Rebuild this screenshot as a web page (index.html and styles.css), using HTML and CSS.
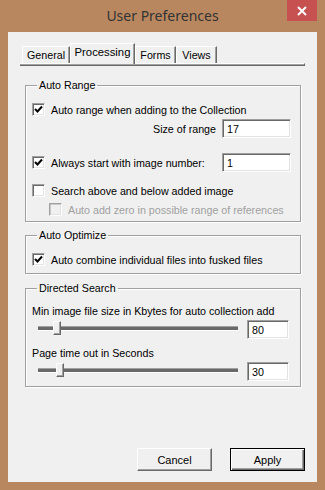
FILE: index.html
```html
<!DOCTYPE html>
<html lang="en">
<head>
    <meta charset="UTF-8">
    <meta name="viewport" content="width=device-width, initial-scale=1.0">
    <title>User Preferences</title>
    <link rel="stylesheet" href="styles.css">
</head>

<body>
    <div class="window">
        <div class="titlebar">
            <span></span>
            <h1 class="title">User Preferences</h1>
            <button class="close" type="button" aria-label="Close">
                <svg width="10" height="10" viewBox="0 0 10 10"><path d="M1 1L9 9M9 1L1 9" stroke="#fff" stroke-width="2"/></svg>
            </button>
        </div>

        <form class="client" action="#">
            <div class="tabs">
                <div class="tab tab-general">General</div>
                <div class="tab tab-processing active">Processing</div>
                <div class="tab tab-forms">Forms</div>
                <div class="tab tab-views">Views</div>
            </div>
            <div class="tab-panel"></div>

            <fieldset class="group group-range">
                <legend>Auto Range</legend>
                <label class="row">
                    <span class="box checked"><svg width="9" height="9" viewBox="0 0 9 9"><path d="M1 4L3.5 6.5L8 1.5" fill="none" stroke="#000" stroke-width="2"/></svg></span>
                    Auto range when adding to the Collection
                </label>
                <div class="row row-end">
                    <label for="rangeSize">Size of range</label>
                    <input class="field" type="text" id="rangeSize" value="17">
                </div>
                <div class="row row-start">
                    <label class="check">
                        <span class="box checked"><svg width="9" height="9" viewBox="0 0 9 9"><path d="M1 4L3.5 6.5L8 1.5" fill="none" stroke="#000" stroke-width="2"/></svg></span>
                        Always start with image number:
                    </label>
                    <input class="field field-push" type="text" value="1">
                </div>
                <label class="row row-search">
                    <span class="box"></span>
                    Search above and below added image
                </label>
                <label class="row row-sub disabled">
                    <span class="box"></span>
                    Auto add zero in possible range of references
                </label>
            </fieldset>

            <fieldset class="group group-optimize">
                <legend>Auto Optimize</legend>
                <label class="row">
                    <span class="box checked"><svg width="9" height="9" viewBox="0 0 9 9"><path d="M1 4L3.5 6.5L8 1.5" fill="none" stroke="#000" stroke-width="2"/></svg></span>
                    Auto combine individual files into fusked files
                </label>
            </fieldset>

            <fieldset class="group group-search">
                <legend>Directed Search</legend>
                <div class="row">Min image file size in Kbytes for auto collection add</div>
                <div class="row row-slider">
                    <div class="slider"><span class="thumb" style="left: 15px"></span></div>
                    <input class="field field-small" type="text" value="80">
                </div>
                <div class="row row-label">Page time out in Seconds</div>
                <div class="row row-slider">
                    <div class="slider"><span class="thumb" style="left: 18px"></span></div>
                    <input class="field field-small" type="text" value="30">
                </div>
            </fieldset>

            <div class="actions">
                <button class="btn" type="button">Cancel</button>
                <button class="btn btn-default" type="submit">Apply</button>
            </div>
        </form>
    </div>
</body>
</html>
```

FILE: styles.css
```css
* {
    box-sizing: border-box;
}

body {
    margin: 0;
    background-color: #b9875f;
    font-family: "Liberation Sans", Arial, sans-serif;
    font-size: 10.7px;
    color: #000;
}

.window {
    width: 325px;
    height: 490px;
}

.titlebar {
    height: 32px;
    display: grid;
    grid-template-columns: 1fr auto 1fr;
}

.title {
    margin: 0;
    font-family: "Noto Sans", sans-serif;
    font-weight: normal;
    font-size: 14px;
    line-height: 32px;
    color: #333;
}

.close {
    justify-self: end;
    width: 30px;
    height: 21px;
    margin-right: 8px;
    padding: 0;
    border: none;
    background-color: #c75050;
    display: flex;
    align-items: center;
    justify-content: center;
}

.client {
    margin: 0 8px;
    height: 450px;
    padding: 0 12px 11px;
    background-color: #f0f0f0;
    display: flex;
    flex-direction: column;
}

/* tabs */
.tabs {
    margin: 11px 0 0 2px;
    height: 20px;
    display: flex;
    align-items: flex-end;
}

.tab {
    height: 17px;
    line-height: 16px;
    text-align: center;
    background-color: #f0f0f0;
    border-top: 1px solid #fff;
    border-left: 1px solid #fff;
    border-right: 1px solid #696969;
    box-shadow: inset -1px 0 #a0a0a0;
}

.tab-general { width: 48px; }
.tab-processing { width: 65px; }
.tab-forms { width: 41px; }
.tab-views { width: 41px; }

.tab.active {
    height: 21px;
    line-height: 17px;
    margin-bottom: -1px;
    position: relative;
    font-size: 11.3px;
}

.tab-panel {
    height: 3px;
    border-top: 1px solid #fff;
    border-bottom: 1px solid #696969;
    border-right: 1px solid #696969;
    box-shadow: inset 0 -1px #a0a0a0;
}

/* group boxes */
.group {
    margin: 13px 4px 0 5px;
    padding: 8px 9px 2px 6px;
    border: 1px solid #a0a0a0;
    box-shadow: 1px 1px #fff, inset 1px 1px #fff;
    min-width: 0;
}

.group legend {
    margin-left: 5px;
    padding: 0 2px;
    line-height: 13px;
}

.group-optimize {
    margin-top: 7px;
    padding-bottom: 4px;
}

.group-search {
    margin-top: 8px;
    padding-top: 6px;
    padding-bottom: 5px;
}

.row {
    height: 19px;
    display: flex;
    align-items: center;
    gap: 6px;
}

.check {
    display: flex;
    align-items: center;
    gap: 6px;
}

.row-end {
    justify-content: flex-end;
}

.row-start {
    margin-top: 15px;
}

.row-search {
    margin-top: 9px;
}

.row-sub {
    padding-left: 17px;
}

.row-label {
    margin-top: 4px;
}

.disabled {
    color: #a0a0a0;
}

.box {
    width: 13px;
    height: 13px;
    flex: none;
    background-color: #fff;
    border-top: 1px solid #a0a0a0;
    border-left: 1px solid #a0a0a0;
    border-bottom: 1px solid #fff;
    border-right: 1px solid #fff;
    box-shadow: inset 1px 1px #696969, inset -1px -1px #e3e3e3;
    display: flex;
    align-items: center;
    justify-content: center;
}

.disabled .box {
    background-color: #f0f0f0;
    box-shadow: inset 1px 1px #c8c8c8, inset -1px -1px #e3e3e3;
}

.field {
    width: 69px;
    height: 19px;
    padding: 0 4px;
    font: inherit;
    color: #000;
    background-color: #fff;
    border-top: 1px solid #a0a0a0;
    border-left: 1px solid #a0a0a0;
    border-bottom: 1px solid #fff;
    border-right: 1px solid #fff;
    box-shadow: inset 1px 1px #696969, inset -1px -1px #e3e3e3;
    outline: none;
}

.field-push {
    margin-left: auto;
}

.field-small {
    width: 42px;
    margin-left: 3px;
}

/* sliders */
.slider {
    position: relative;
    width: 200px;
    height: 19px;
    margin-left: 6px;
}

.slider::before {
    content: '';
    position: absolute;
    left: 0;
    right: 0;
    top: 6px;
    height: 3px;
    border-top: 1px solid #a0a0a0;
    border-bottom: 1px solid #fff;
    background-color: #696969;
}

.thumb {
    position: absolute;
    top: 1px;
    width: 8px;
    height: 14px;
    background-color: #f0f0f0;
    border-top: 1px solid #fff;
    border-left: 1px solid #fff;
    border-right: 1px solid #696969;
    border-bottom: 1px solid #696969;
    box-shadow: inset -1px -1px #a0a0a0;
}

/* buttons */
.actions {
    margin-top: auto;
    display: flex;
    justify-content: flex-end;
    gap: 18px;
}

.btn {
    width: 75px;
    height: 23px;
    padding: 0;
    font: inherit;
    font-size: 11px;
    color: #000;
    background-color: #f0f0f0;
    border-top: 1px solid #fff;
    border-left: 1px solid #fff;
    border-right: 1px solid #696969;
    border-bottom: 1px solid #696969;
    box-shadow: inset -1px -1px #a0a0a0;
}

.btn-default {
    border: 1px solid #000;
    box-shadow: inset 1px 1px #fff, inset -1px -1px #696969, inset -2px -2px #a0a0a0;
}
```
